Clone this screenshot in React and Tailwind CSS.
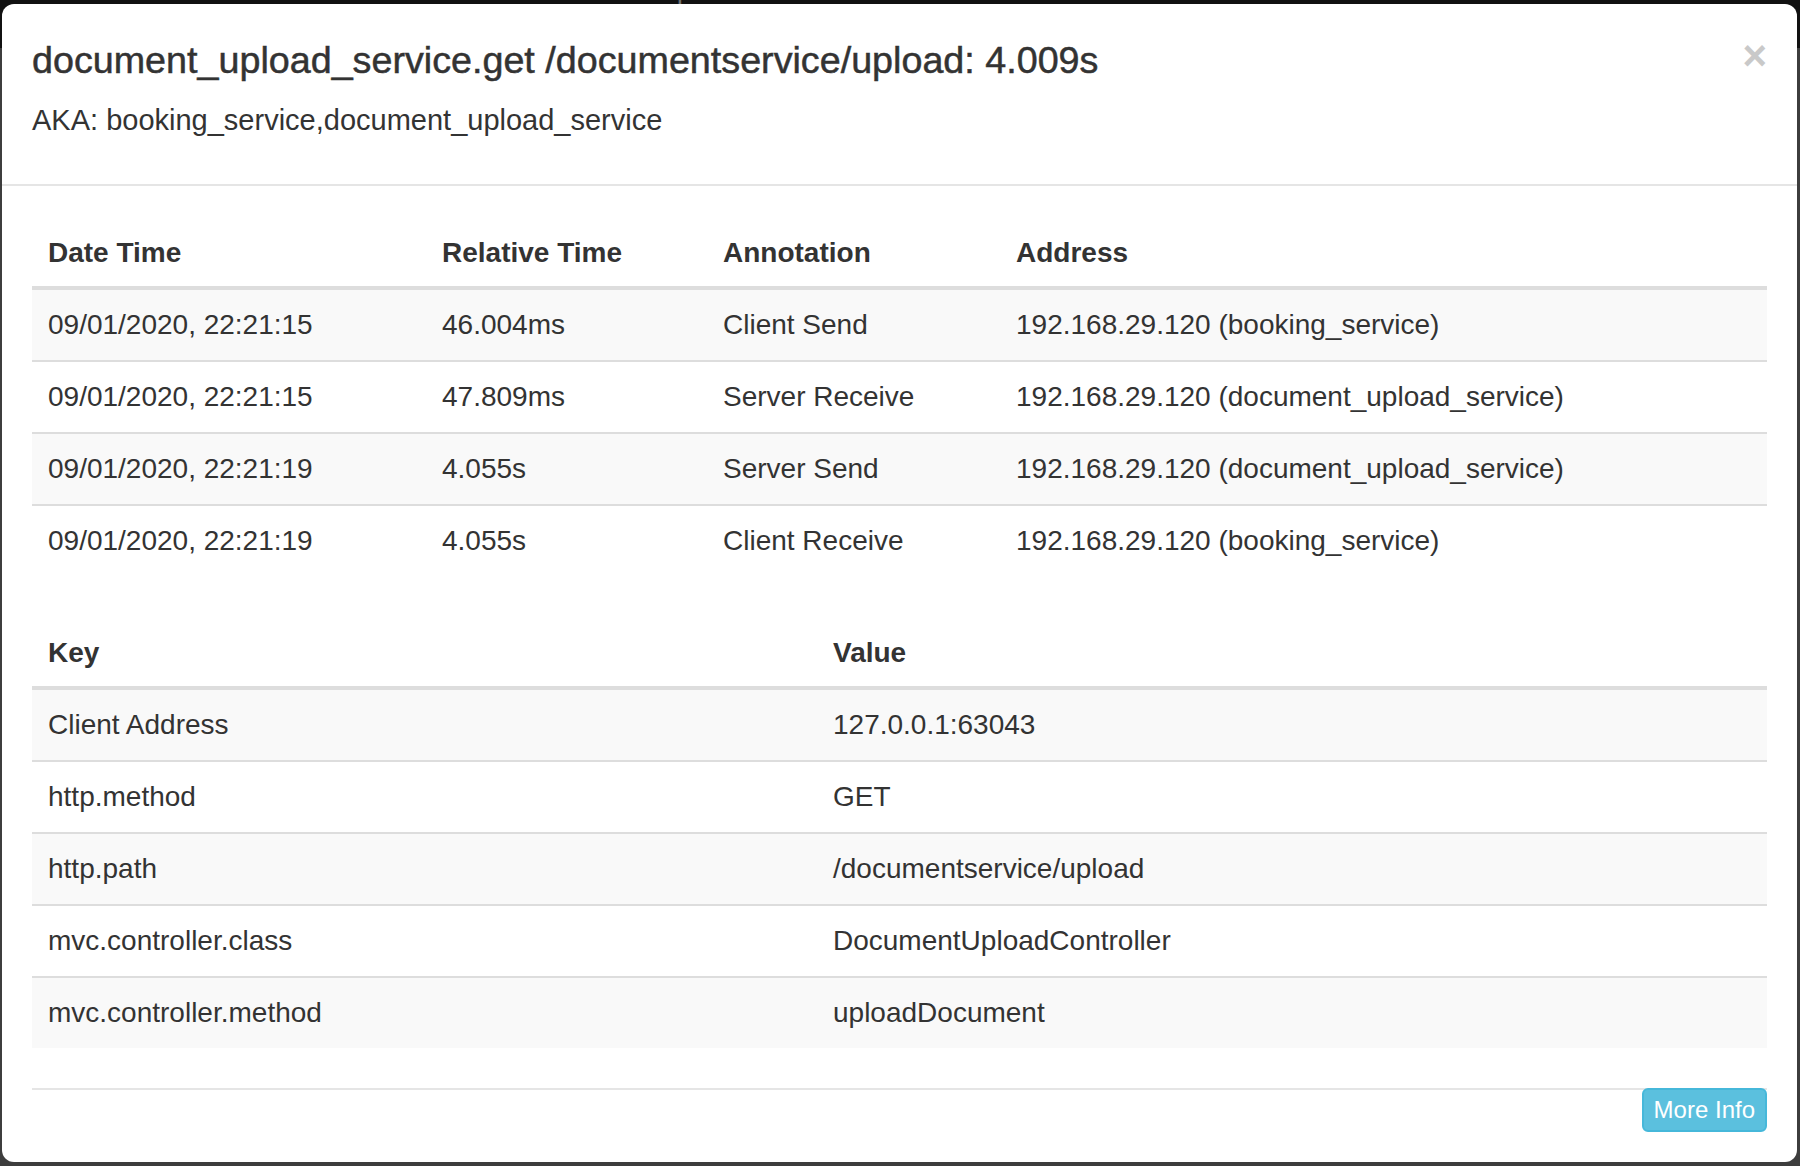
import React from "react";

const annotations = [
  ["09/01/2020, 22:21:15", "46.004ms", "Client Send", "192.168.29.120 (booking_service)"],
  ["09/01/2020, 22:21:15", "47.809ms", "Server Receive", "192.168.29.120 (document_upload_service)"],
  ["09/01/2020, 22:21:19", "4.055s", "Server Send", "192.168.29.120 (document_upload_service)"],
  ["09/01/2020, 22:21:19", "4.055s", "Client Receive", "192.168.29.120 (booking_service)"],
];

const tags = [
  ["Client Address", "127.0.0.1:63043"],
  ["http.method", "GET"],
  ["http.path", "/documentservice/upload"],
  ["mvc.controller.class", "DocumentUploadController"],
  ["mvc.controller.method", "uploadDocument"],
];

export default function App() {
  return (
    <div className="w-[1800px] h-[1166px] overflow-hidden flex flex-col bg-[linear-gradient(#111111_0_48px,#3d3d3d_48px)] font-['Liberation_Sans',Arial,sans-serif] text-[#333]">
      {/* nav behind the backdrop, only its bottom edge shows */}
      <div className="h-[4px] overflow-hidden shrink-0">
        <div className="flex -mt-[26px] text-[28px] leading-[30px] text-[#6f6f6f] whitespace-nowrap">
          <span className="ml-[-40px] w-[193px]">Behavior</span>
          <span className="w-[209px]">Find a trace</span>
          <span className="w-[279px]">View Saved Trace</span>
          <span>Dependencies</span>
        </div>
      </div>

      {/* modal */}
      <div className="ml-[2px] mr-[3px] h-[1158px] bg-white rounded-[12px] flex flex-col">
        {/* header */}
        <div className="relative px-[30px] pt-[30px] pb-[44px] border-b-2 border-[#e5e5e5]">
          <h4 className="text-[37.7px] leading-[52px] font-medium [-webkit-text-stroke:0.5px_#333]">
            document_upload_service.get /documentservice/upload: 4.009s
          </h4>
          <div className="mt-[14px] text-[29px] leading-[40px]">AKA: booking_service,document_upload_service</div>
          <button className="absolute right-[30px] top-[31px] text-[42px] leading-[42px] font-bold text-[#c9c9c9]">
            ×
          </button>
        </div>

        {/* body */}
        <div className="px-[30px] pt-[30px] text-[28px] leading-[40px]">
          <table className="w-full border-collapse mb-[40px]">
            <thead>
              <tr>
                <th className="w-[394px] text-left font-bold px-[16px] pt-[17px] pb-[13px] border-b-4 border-[#ddd]">Date Time</th>
                <th className="w-[281px] text-left font-bold px-[16px] pt-[17px] pb-[13px] border-b-4 border-[#ddd]">Relative Time</th>
                <th className="w-[293px] text-left font-bold px-[16px] pt-[17px] pb-[13px] border-b-4 border-[#ddd]">Annotation</th>
                <th className="text-left font-bold px-[16px] pt-[17px] pb-[13px] border-b-4 border-[#ddd]">Address</th>
              </tr>
            </thead>
            <tbody>
              {annotations.map((row, i) => (
                <tr key={i} className={i % 2 === 0 ? "bg-[#f9f9f9]" : "bg-white"}>
                  {row.map((cell, j) => (
                    <td key={j} className="px-[16px] py-[15px] border-t-2 border-[#ddd] whitespace-nowrap">
                      {cell}
                    </td>
                  ))}
                </tr>
              ))}
            </tbody>
          </table>

          <table className="w-full border-collapse mb-[40px]">
            <thead>
              <tr>
                <th className="w-[785px] text-left font-bold px-[16px] pt-[17px] pb-[13px] border-b-4 border-[#ddd]">Key</th>
                <th className="text-left font-bold px-[16px] pt-[17px] pb-[13px] border-b-4 border-[#ddd]">Value</th>
              </tr>
            </thead>
            <tbody>
              {tags.map((row, i) => (
                <tr key={i} className={i % 2 === 0 ? "bg-[#f9f9f9]" : "bg-white"}>
                  <td className="px-[16px] py-[15px] border-t-2 border-[#ddd]">{row[0]}</td>
                  <td className="px-[16px] py-[15px] border-t-2 border-[#ddd]">{row[1]}</td>
                </tr>
              ))}
            </tbody>
          </table>

          {/* footer */}
          <div className="border-t-2 border-[#e5e5e5] flex justify-end">
            <button className="-mt-[2px] h-[44px] px-[10px] rounded-[6px] border-2 border-[#46b8da] bg-[#5bc0de] text-white text-[24px] leading-[36px]">
              More Info
            </button>
          </div>
        </div>
      </div>
    </div>
  );
}
